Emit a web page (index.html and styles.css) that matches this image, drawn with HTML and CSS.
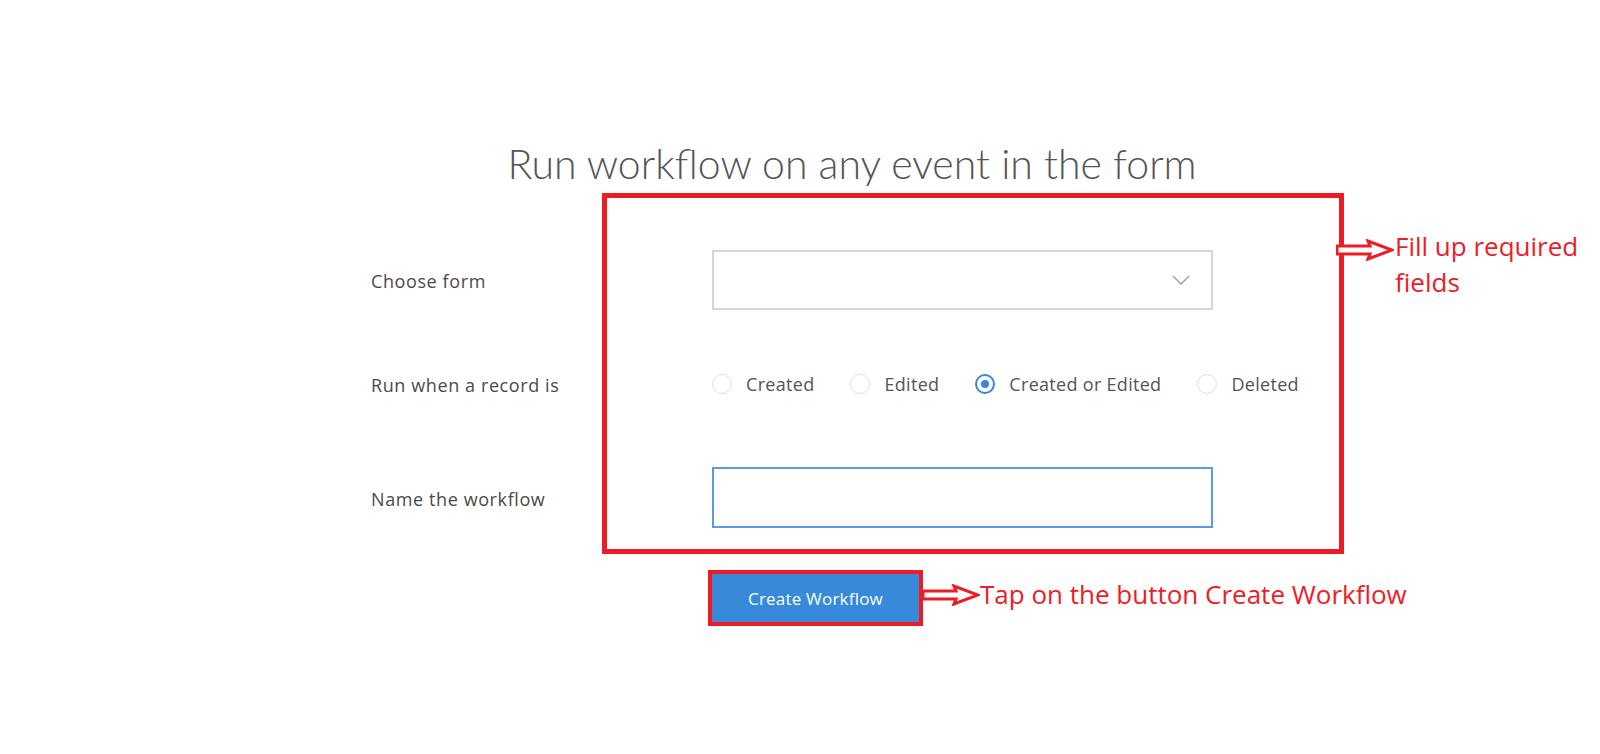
FILE: index.html
```html
<!DOCTYPE html>
<html lang="en">
<head>
<meta charset="utf-8">
<title>Run workflow</title>
<link rel="stylesheet" href="styles.css">
</head>
<body>
<main class="page">
  <h1 class="title">Run workflow on any event in the form</h1>
  <div class="form">
    <div class="row row-select">
      <span class="label">Choose form</span>
      <div class="select">
        <svg class="chevron" width="18" height="10" viewBox="0 0 18 10"><path d="M1 1 L9 9 L17 1" fill="none" stroke="#9a9a9a" stroke-width="1.3"/></svg>
      </div>
    </div>
    <div class="row row-radio">
      <span class="label">Run when a record is</span>
      <div class="radios">
        <span class="radio"><span class="circle"></span>Created</span>
        <span class="radio"><span class="circle"></span>Edited</span>
        <span class="radio"><span class="circle checked"></span>Created or Edited</span>
        <span class="radio"><span class="circle"></span>Deleted</span>
      </div>
    </div>
    <div class="row row-input">
      <span class="label">Name the workflow</span>
      <div class="input"></div>
    </div>
    <div class="actions">
      <button class="btn">Create Workflow</button>
      <svg class="arrow arrow-btn" width="58" height="22" viewBox="0 0 58 22"><polygon points="1,7 34,7 32,2 56,11 32,20 34,15 1,15" fill="#fff" stroke="#ed1c24" stroke-width="3" stroke-linejoin="miter"/></svg>
      <span class="note note-btn">Tap on the button Create Workflow</span>
    </div>
  </div>
  <div class="annot-box"></div>
  <div class="annot-side">
    <svg class="arrow" width="58" height="22" viewBox="0 0 58 22"><polygon points="1,7 34,7 32,2 56,11 32,20 34,15 1,15" fill="#fff" stroke="#ed1c24" stroke-width="3"/></svg>
    <span class="note note-side">Fill up required<br>fields</span>
  </div>
</main>
</body>
</html>
```
FILE: styles.css
```css
html, body {
  margin: 0;
  padding: 0;
  background: #fff;
}
body {
  font-family: "Open Sans", Lato, sans-serif;
  color: #4a4a4a;
}
.page {
  position: relative;
  height: 754px;
  overflow: hidden;
}
.title {
  margin: 0;
  padding: 140px 0 0 104px;
  text-align: center;
  font-family: Lato, "Open Sans", sans-serif;
  font-size: 41px;
  line-height: 48px;
  font-weight: 300;
  color: #555;
}
.form {
  margin: 62px 0 0 371px;
}
.row {
  display: grid;
  grid-template-columns: 341px 501px;
  align-items: center;
}
.label {
  font-size: 18px;
  letter-spacing: 0.6px;
  color: #4a4a4a;
  position: relative;
  top: 1px;
}
.row-select { height: 60px; }
.row-radio { height: 40px; margin-top: 54px; }
.row-input { height: 61px; margin-top: 63px; }
.select {
  box-sizing: border-box;
  height: 60px;
  border: 2px solid #d6d6d6;
  display: flex;
  align-items: center;
  justify-content: flex-end;
  padding-right: 21px;
}
.input {
  box-sizing: border-box;
  height: 61px;
  border: 2px solid #5b9be2;
}
.radios {
  display: flex;
  align-items: center;
  gap: 36px;
  white-space: nowrap;
}
.radio {
  display: inline-flex;
  align-items: center;
  gap: 14px;
  font-size: 18px;
  letter-spacing: 0.3px;
  color: #555;
}
.circle {
  box-sizing: border-box;
  width: 20px;
  height: 20px;
  border-radius: 50%;
  border: 1.5px solid #dcdfe3;
  display: inline-flex;
  align-items: center;
  justify-content: center;
}
.circle.checked {
  border: 2px solid #3a86d8;
}
.circle.checked::after {
  content: "";
  width: 8px;
  height: 8px;
  border-radius: 50%;
  background: #3a86d8;
}
.actions {
  display: flex;
  align-items: center;
  margin-top: 46px;
  padding-left: 341px;
}
.btn {
  width: 207px;
  height: 48px;
  border: 0;
  background: #3789d9;
  color: #fff;
  font-family: "Open Sans", Lato, sans-serif;
  font-size: 17px;
  font-weight: 500;
  letter-spacing: 0.2px;
  outline: 4px solid #ed1c24;
  padding: 0;
}
.arrow-btn {
  margin-left: 3px;
  margin-bottom: 6px;
}
.note {
  font-family: "Open Sans", "Liberation Sans", sans-serif;
  color: #ee1c25;
  font-size: 26px;
}
.note-btn {
  margin-left: 0;
  margin-bottom: 8px;
}
.annot-box {
  position: absolute;
  left: 602px;
  top: 193px;
  width: 732px;
  height: 351px;
  border: 5px solid #ed1c24;
}
.annot-side {
  position: absolute;
  left: 1336px;
  top: 228px;
  display: flex;
  align-items: flex-start;
}
.annot-side .arrow {
  margin-top: 11px;
}
.note-side {
  line-height: 36px;
  margin-left: 1px;
}
```
